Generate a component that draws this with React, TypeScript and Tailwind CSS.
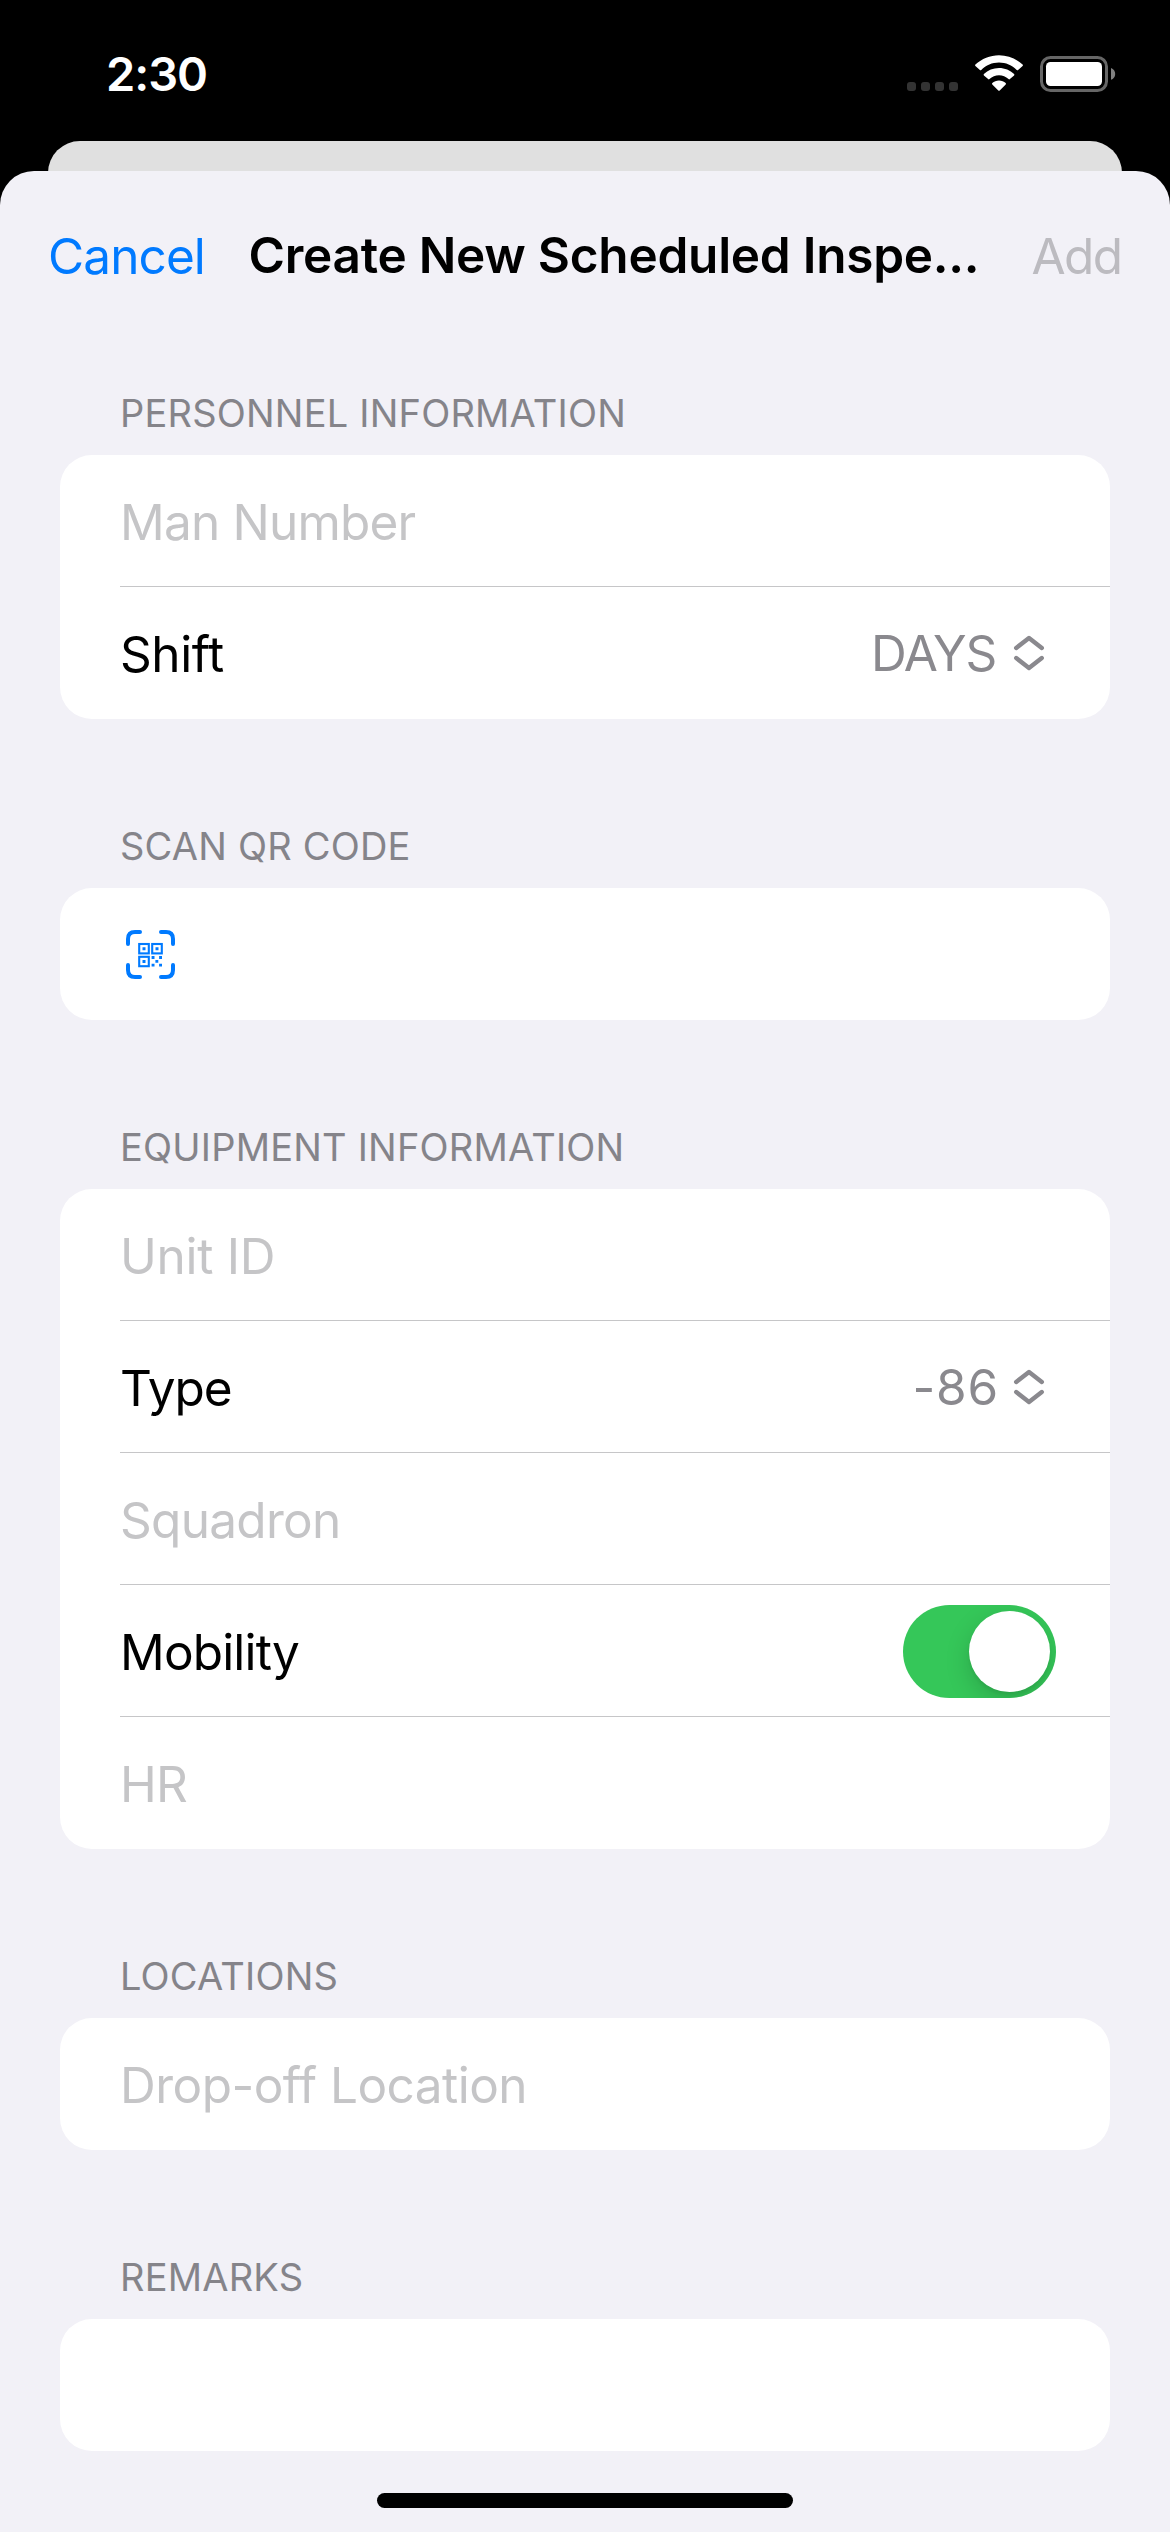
import type { ReactNode } from 'react';

function StatusBar() {
  return (
    <div className="flex h-[141px] items-start justify-between pl-[106px] pr-[54px]">
      <span className="mt-[44px] text-[47px] font-semibold leading-[60px] tracking-[-1.06px] text-white">2:30</span>
      <div className="mt-[55px] flex items-start">
        <div className="mt-[27px] flex gap-[5px]">
          <i className="size-[9px] rounded-[3px] bg-[#333333]" />
          <i className="size-[9px] rounded-[3px] bg-[#333333]" />
          <i className="size-[9px] rounded-[3px] bg-[#333333]" />
          <i className="size-[9px] rounded-[3px] bg-[#333333]" />
        </div>
        <WifiIcon />
        <BatteryIcon />
      </div>
    </div>
  );
}

function WifiIcon() {
  return (
    <svg className="ml-[17px] h-[36px] w-[48px]" viewBox="0 0 48 36" fill="#fff">
      <path d="M24 7.6C30.8 7.6 37 10.4 41.7 14.9C42.1 15.3 42.7 15.3 43.1 14.9L47.6 11C48 10.6 48 9.9 47.6 9.5C41.2 3.7 33 0.2 24 0.2C15 0.2 6.8 3.7 0.4 9.5C0 9.9 0 10.6 0.4 11L4.9 14.9C5.3 15.3 5.9 15.3 6.3 14.9C11 10.4 17.2 7.6 24 7.6Z" />
      <path d="M24 20.2C27.6 20.2 30.9 21.8 33.5 24.1C33.9 24.5 34.5 24.5 34.9 24.1L39.1 20.4C39.5 20 39.5 19.3 39.1 18.9C35.1 15.2 29.8 12.9 24 12.9C18.2 12.9 12.9 15.2 8.9 18.9C8.5 19.3 8.5 20 8.9 20.4L13.1 24.1C13.5 24.5 14.1 24.5 14.5 24.1C17.1 21.8 20.4 20.2 24 20.2Z" />
      <path d="M30.7 28.1C31.1 28.5 31.1 29.1 30.7 29.5L24.7 35.5C24.3 35.9 23.7 35.9 23.3 35.5L17.3 29.5C16.9 29.1 16.9 28.5 17.3 28.1C19.1 26.5 21.4 25.5 24 25.5C26.6 25.5 28.9 26.5 30.7 28.1Z" />
    </svg>
  );
}

function BatteryIcon() {
  return (
    <svg className="ml-[17px] h-[38px] w-[76px]" viewBox="0 0 76 38">
      <rect x="1.5" y="2.5" width="65" height="33" rx="9" fill="none" stroke="#666" strokeWidth="3" />
      <rect x="6" y="7" width="56" height="24" rx="4.5" fill="#fff" />
      <path d="M71 13C73.6 14 75.2 16.2 75.2 18.9C75.2 21.6 73.6 23.8 71 24.8Z" fill="#808080" />
    </svg>
  );
}

function Section({ title, children }: { title: string; children: ReactNode }) {
  return (
    <section>
      <h2 className="pb-[22px] pl-[60px] text-[38px] leading-[40px] tracking-[0.2px] text-[#85848a]">{title}</h2>
      <div className="overflow-hidden rounded-[32px] bg-white">{children}</div>
    </section>
  );
}

function Row({ children, last = false }: { children?: ReactNode; last?: boolean }) {
  return (
    <div className="h-[132px] pl-[60px]">
      <div className={`flex h-full items-center justify-between ${last ? '' : 'shadow-[inset_0_-1px_0_#c6c6c8]'}`}>
        {children}
      </div>
    </div>
  );
}

function Placeholder({ children, className = 'tracking-[-0.8px]' }: { children: string; className?: string }) {
  return <span className={`pt-[2px] text-[49.5px] leading-[60px] text-[#c5c5c7] ${className}`}>{children}</span>;
}

function Label({ children, className }: { children: string; className: string }) {
  return <span className={`pt-[2px] text-[49.5px] leading-[60px] text-black ${className}`}>{children}</span>;
}

function Picker({ value, className }: { value: string; className: string }) {
  return (
    <div className="flex items-center pr-[64px] text-[#8a898e]">
      <span className={`text-[49.5px] leading-[60px] ${className}`}>{value}</span>
      <svg className="h-[36px] w-[34px]" viewBox="0 0 34 36" fill="none" stroke="currentColor" strokeWidth="4.4" strokeLinecap="round" strokeLinejoin="round">
        <path d="M4.2 13L17 3L29.8 13" />
        <path d="M4.2 23L17 33L29.8 23" />
      </svg>
    </div>
  );
}

function Toggle() {
  return (
    <div className="mr-[54px] mt-px flex h-[93px] w-[153px] items-center justify-end overflow-hidden rounded-full bg-[#35c759] pr-[6px]">
      <div className="size-[81px] rounded-full bg-white shadow-[0_9px_24px_rgba(0,0,0,0.17),0_3px_3px_rgba(0,0,0,0.05)]" />
    </div>
  );
}

function QrScanIcon() {
  return (
    <svg className="ml-[6px] h-[49px] w-[49px]" viewBox="0 0 49 49" fill="none" stroke="#007aff">
      <path
        d="M2 14V9Q2 2 9 2H14M35 2H40Q47 2 47 9V14M47 35V40Q47 47 40 47H35M14 47H9Q2 47 2 40V35"
        strokeWidth="4"
        strokeLinecap="round"
      />
      <g strokeWidth="2.1">
        <rect x="13.2" y="14" width="9.6" height="9.4" />
        <rect x="26.2" y="14" width="9.6" height="9.4" />
        <rect x="13.2" y="26.8" width="9.6" height="9.4" />
      </g>
      <g fill="#007aff" stroke="none">
        <path d="M16.5 17.2h3v3h-3zM29.5 17.2h3v3h-3zM16.5 30h3v3h-3z" />
        <path d="M25.6 26h2.9v2.9h-2.9zM33.1 26h2.9v2.9h-2.9zM29.4 29.9h2.9v2.9h-2.9zM25.6 33.7h2.9v2.9h-2.9zM33.1 33.7h2.9v2.9h-2.9z" />
      </g>
    </svg>
  );
}

export default function App() {
  return (
    <div className="flex h-[2532px] w-[1170px] flex-col overflow-hidden bg-black font-['Inter',sans-serif] [font-feature-settings:'calt'_0,'liga'_0]">
      <StatusBar />
      <div className="mx-[48px] h-[80px] shrink-0 rounded-t-[32px] bg-[#e0e0e0]" />
      <main className="-mt-[50px] flex flex-1 flex-col rounded-t-[34px] bg-[#f2f1f7] pt-[53px]">
        <header className="flex h-[64px] items-center justify-between whitespace-nowrap pl-[48px] pr-[48px] text-[49.5px] leading-[64px]">
          <span className="w-[200.5px] tracking-[-0.9px] text-[#007aff]">Cancel</span>
          <h1 className="-mt-[2px] flex-1 font-semibold tracking-[-0.25px] text-black">Create New Scheduled Inspe...</h1>
          <span className="w-[90.5px] tracking-[-1.6px] text-[#bcbbc0]">Add</span>
        </header>

        <div className="mt-[105px] flex flex-col gap-[107px] px-[60px]">
          <Section title="PERSONNEL INFORMATION">
            <Row><Placeholder>Man Number</Placeholder></Row>
            <Row last>
              <Label className="tracking-[-0.4px]">Shift</Label>
              <Picker value="DAYS" className="mr-[16px] tracking-[-1.24px]" />
            </Row>
          </Section>

          <Section title="SCAN QR CODE">
            <Row last><QrScanIcon /></Row>
          </Section>

          <Section title="EQUIPMENT INFORMATION">
            <Row><Placeholder className="tracking-[-0.3px]">Unit ID</Placeholder></Row>
            <Row>
              <Label className="tracking-[-1.1px]">Type</Label>
              <Picker value="-86" className="mr-[13px] tracking-[0.8px]" />
            </Row>
            <Row><Placeholder className="tracking-[-0.7px]">Squadron</Placeholder></Row>
            <Row>
              <Label className="tracking-[-0.83px]">Mobility</Label>
              <Toggle />
            </Row>
            <Row last><Placeholder>HR</Placeholder></Row>
          </Section>

          <Section title="LOCATIONS">
            <Row last><Placeholder className="tracking-[-0.52px]">Drop-off Location</Placeholder></Row>
          </Section>

          <Section title="REMARKS">
            <Row last />
          </Section>
        </div>

        <div className="mx-auto mt-[42px] h-[15px] w-[416px] rounded-full bg-black" />
      </main>
    </div>
  );
}
